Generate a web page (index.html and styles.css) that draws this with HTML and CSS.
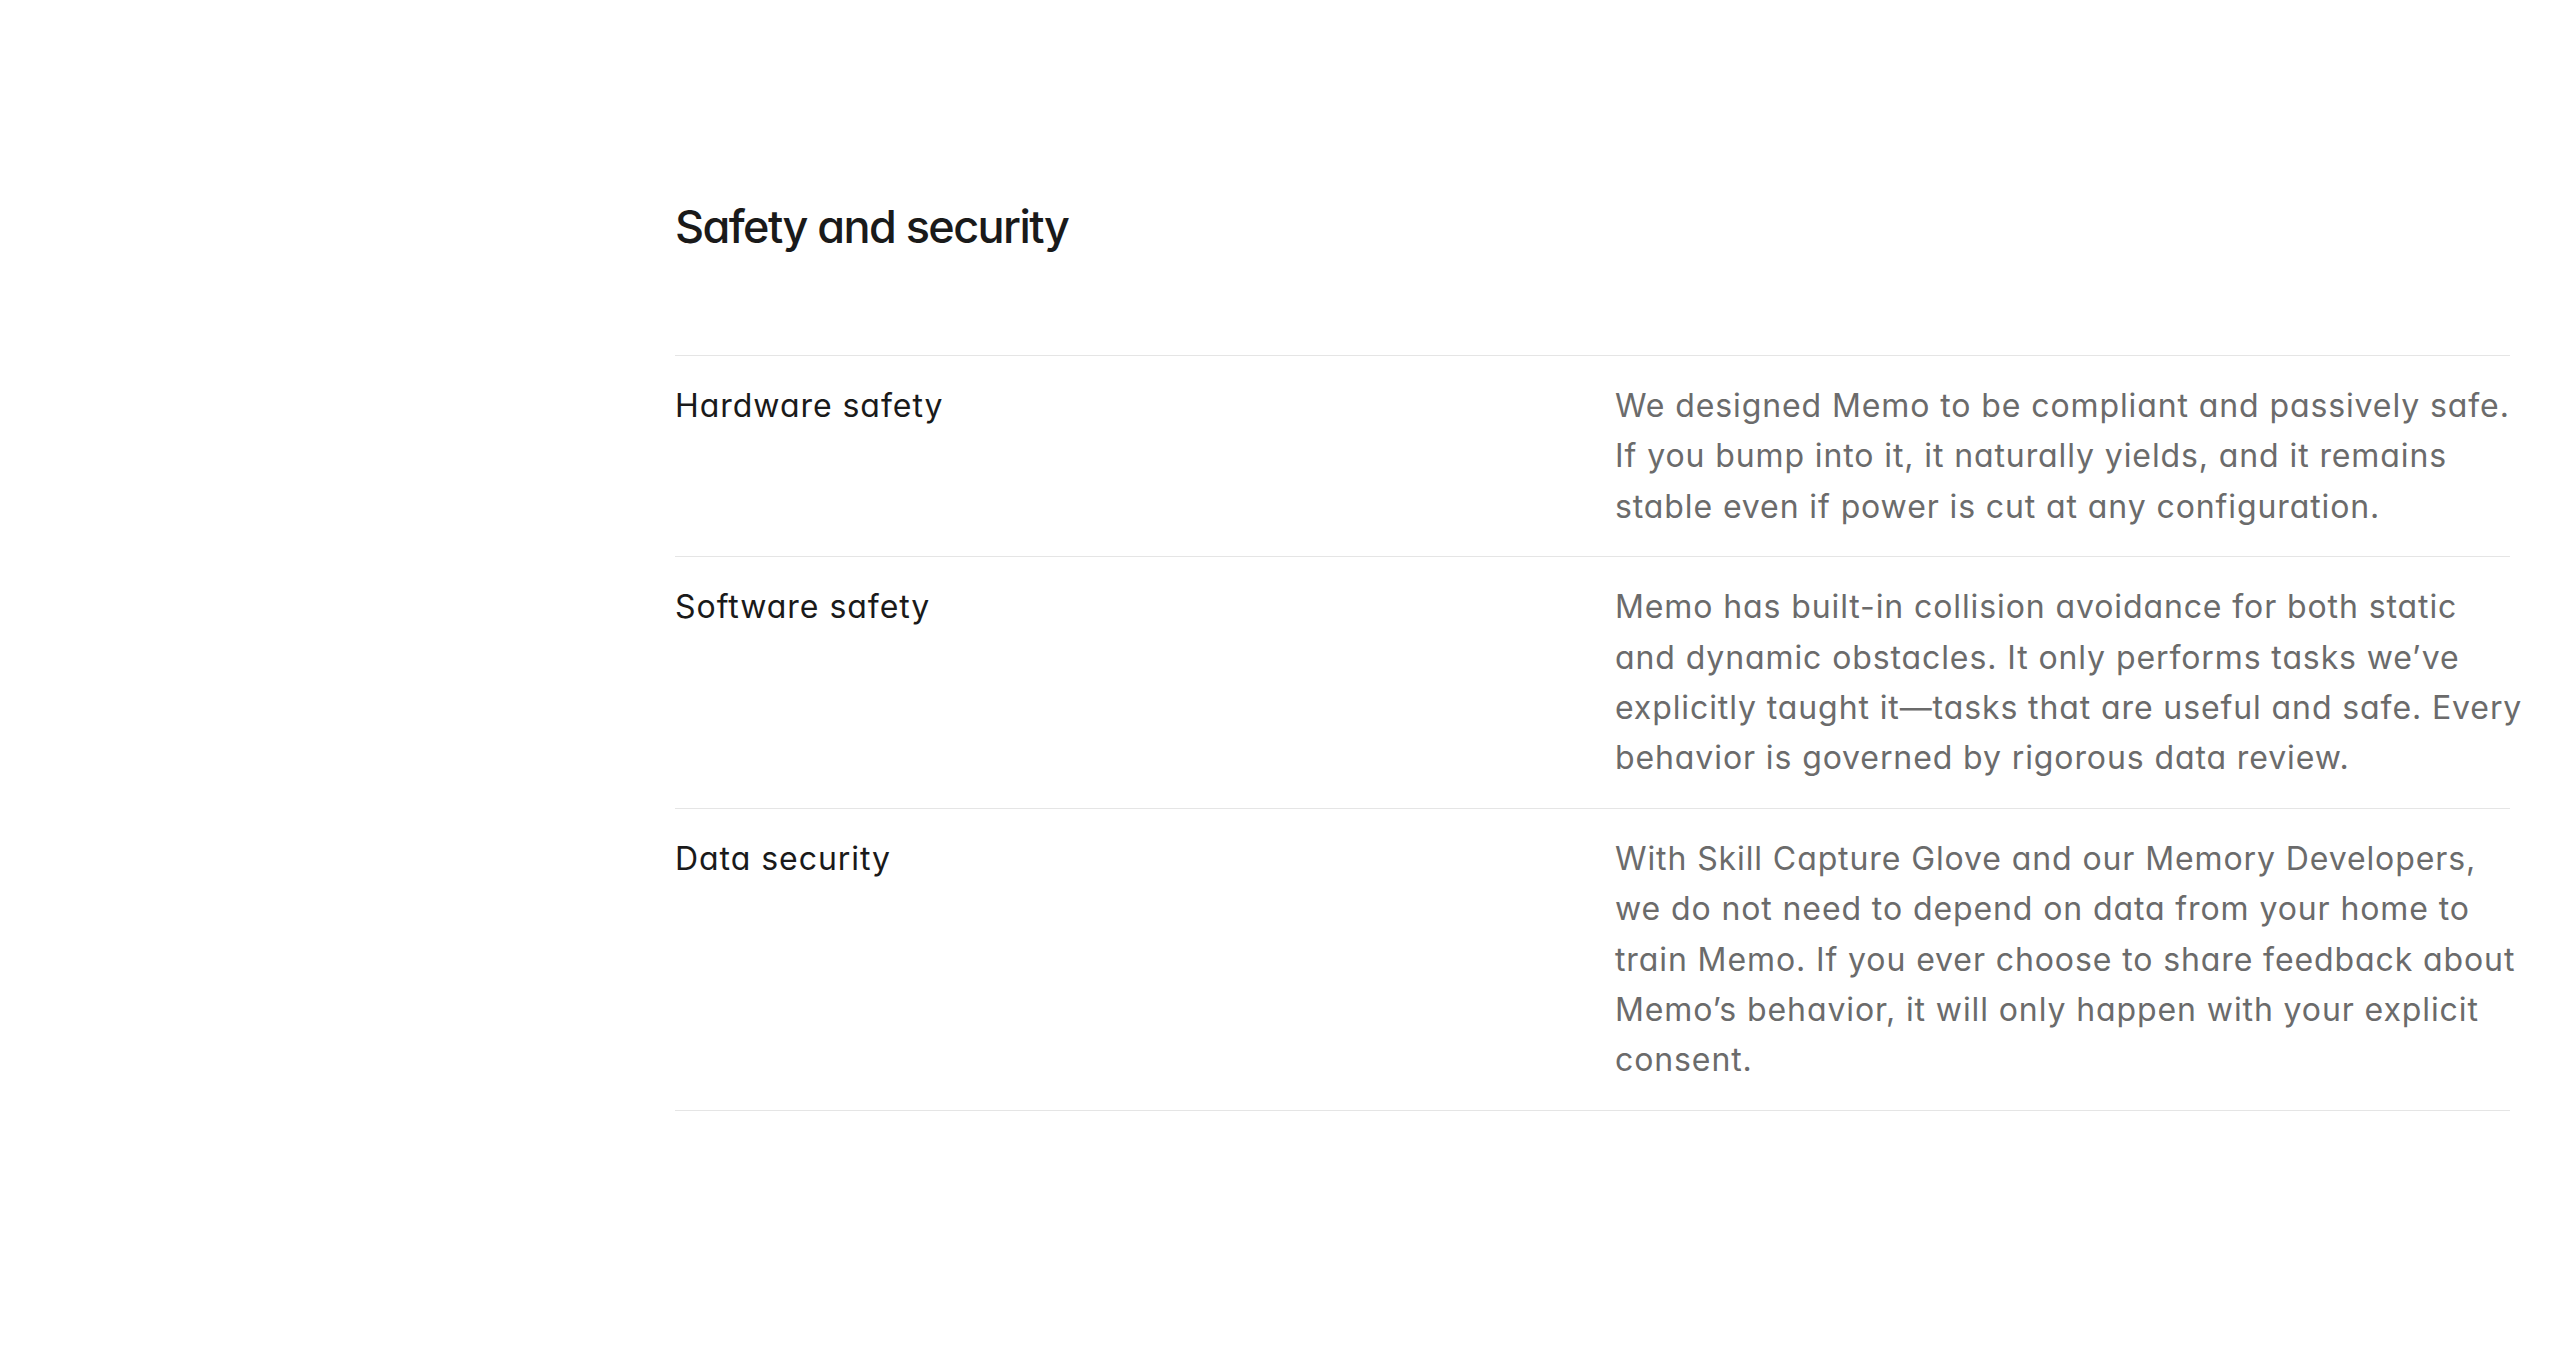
FILE: index.html
```html
<!DOCTYPE html>
<html lang="en">
<head>
    <meta charset="UTF-8">
    <meta name="viewport" content="width=device-width, initial-scale=1.0">
    <title>Safety and security</title>
    <link rel="stylesheet" href="styles.css">
</head>
<body>
    <section class="safety">
        <h2 class="safety-title">Safety and security</h2>
        <div class="safety-list">
            <div class="safety-row">
                <h3 class="safety-label">Hardware safety</h3>
                <p class="safety-text">We designed Memo to be compliant and passively safe. If you bump into it, it naturally yields, and it remains stable even if power is cut at any configuration.</p>
            </div>
            <div class="safety-row">
                <h3 class="safety-label">Software safety</h3>
                <p class="safety-text">Memo has built-in collision avoidance for both static and dynamic obstacles. It only performs tasks we’ve explicitly taught it—tasks that are useful and safe. Every behavior is governed by rigorous data review.</p>
            </div>
            <div class="safety-row">
                <h3 class="safety-label">Data security</h3>
                <p class="safety-text">With Skill Capture Glove and our Memory Developers, we do not need to depend on data from your home to train Memo. If you ever choose to share feedback about Memo’s behavior, it will only happen with your explicit consent.</p>
            </div>
        </div>
    </section>
</body>
</html>
```

FILE: styles.css
```css
* {
    margin: 0;
    padding: 0;
    box-sizing: border-box;
}

body {
    font-family: Inter, 'Noto Sans', Arial, sans-serif;
    font-feature-settings: "cv11" 1;
    background: #ffffff;
    color: #1a1a1a;
    min-height: 100vh;
}

.safety {
    padding: 200px 46px 120px 675px;
}

.safety-title {
    font-size: 45px;
    font-weight: 500;
    line-height: 1.2;
    letter-spacing: -0.035em;
    margin-bottom: 101px;
}

.safety-list {
    border-bottom: 1px solid #e5e5e5;
}

.safety-row {
    display: grid;
    grid-template-columns: 1fr 895px;
    border-top: 1px solid #e5e5e5;
    padding: 25px 0 24px;
}

.safety-label {
    font-size: 32px;
    font-weight: 400;
    line-height: 50.4px;
    letter-spacing: 0.03em;
    color: #1a1a1a;
}

/* text runs a touch past the rule so the reference's line breaks hold */
.safety-text {
    font-size: 32px;
    line-height: 50.4px;
    letter-spacing: 0.028em;
    color: #6b6b6b;
    margin-right: -14px;
}
```
